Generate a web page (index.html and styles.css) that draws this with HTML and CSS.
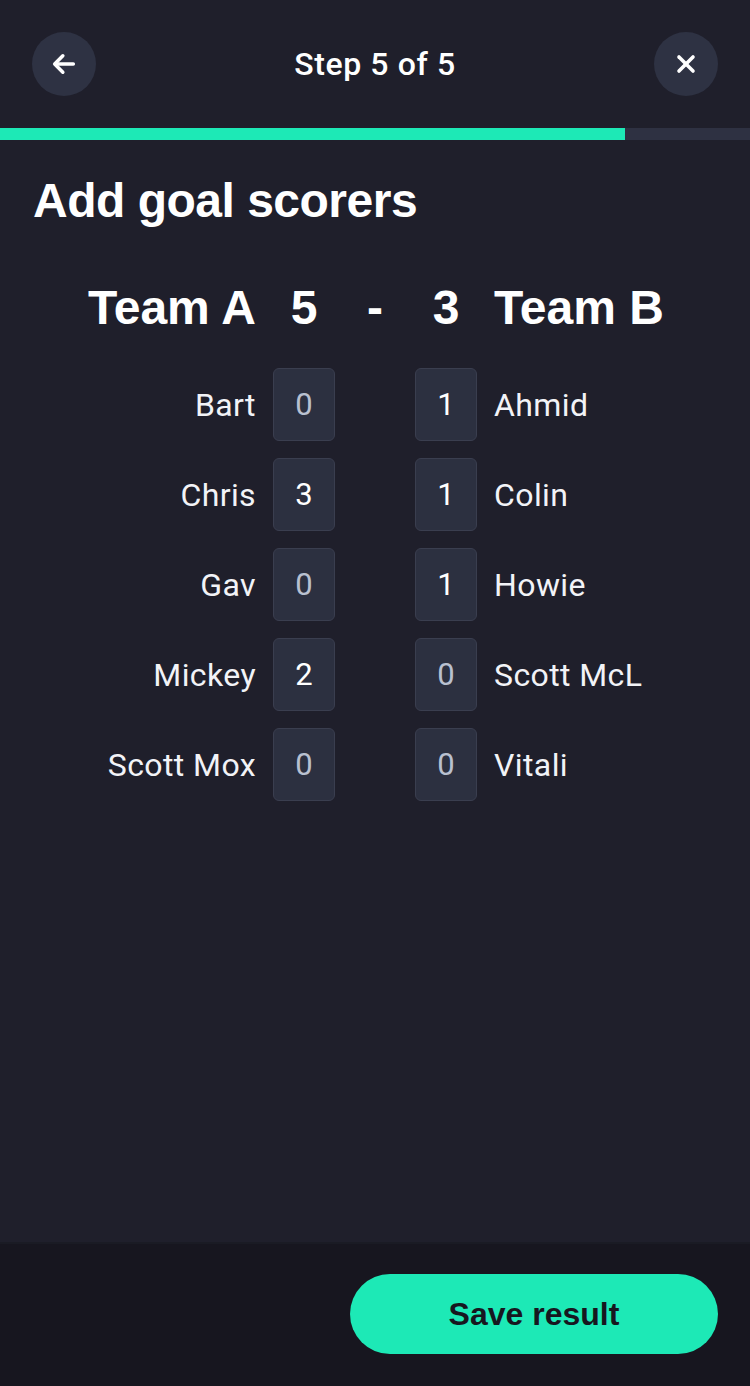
FILE: index.html
```html
<!DOCTYPE html>
<html lang="en">
<head>
    <meta charset="UTF-8">
    <meta name="viewport" content="width=device-width, initial-scale=1.0">
    <title>Add goal scorers</title>
    <link rel="stylesheet" href="styles.css">
</head>
<body>
    <div class="page">
        <header class="top-bar">
            <button class="round-btn" aria-label="Back">
                <svg width="28" height="28" viewBox="0 0 24 24" fill="none" stroke="#fff" stroke-width="3" stroke-linecap="round" stroke-linejoin="round">
                    <path d="M20 12H5"/>
                    <path d="M11 5l-7 7 7 7"/>
                </svg>
            </button>
            <div class="step-title">Step 5 of 5</div>
            <button class="round-btn" aria-label="Close">
                <svg width="24" height="24" viewBox="0 0 24 24" fill="none" stroke="#fff" stroke-width="3.6" stroke-linecap="round">
                    <path d="M5 5l14 14"/>
                    <path d="M19 5L5 19"/>
                </svg>
            </button>
        </header>

        <div class="progress">
            <div class="progress-fill"></div>
        </div>

        <main class="content">
            <h1>Add goal scorers</h1>

            <div class="scorers">
                <div class="team-name left">Team A</div>
                <div class="score">5</div>
                <div class="score">-</div>
                <div class="score">3</div>
                <div class="team-name right">Team B</div>
            </div>

            <div id="playerRows" class="scorers players"></div>
        </main>

        <footer class="footer">
            <button class="save-btn">Save result</button>
        </footer>
    </div>

    <script>
        const teamA = [['Bart', 0], ['Chris', 3], ['Gav', 0], ['Mickey', 2], ['Scott Mox', 0]];
        const teamB = [['Ahmid', 1], ['Colin', 1], ['Howie', 1], ['Scott McL', 0], ['Vitali', 0]];

        function goalBox(goals) {
            return `<div class="goal-box${goals === 0 ? ' empty' : ''}">${goals}</div>`;
        }

        const rows = document.getElementById('playerRows');
        teamA.forEach((player, i) => {
            const other = teamB[i];
            rows.innerHTML += `
                <div class="player left">${player[0]}</div>
                ${goalBox(player[1])}
                <div></div>
                ${goalBox(other[1])}
                <div class="player right">${other[0]}</div>
            `;
        });
    </script>
</body>
</html>
```

FILE: styles.css
```css
body {
    margin: 0;
    padding: 0;
    background-color: #1f1f2b;
    color: #fff;
    font-family: 'Roboto', 'Liberation Sans', sans-serif;
}

.page {
    display: flex;
    flex-direction: column;
    height: 100vh;
}

.top-bar {
    display: flex;
    align-items: center;
    justify-content: space-between;
    height: 128px;
    padding: 0 32px;
    box-sizing: border-box;
}

.round-btn {
    width: 64px;
    height: 64px;
    border-radius: 50%;
    border: none;
    background-color: #2e3243;
    display: flex;
    align-items: center;
    justify-content: center;
    padding: 0;
    cursor: pointer;
}

.step-title {
    font-size: 32px;
    font-weight: 500;
    letter-spacing: 0.6px;
}

.progress {
    height: 12px;
    background-color: #2e3142;
}

.progress-fill {
    width: 625px;
    height: 100%;
    background-color: #1de9b6;
}

.content {
    flex: 1;
    padding: 0 33px;
}

h1 {
    font-family: 'Liberation Sans', Arial, sans-serif;
    font-size: 48px;
    font-weight: 700;
    margin: 34px 0 0;
    line-height: 54px;
    letter-spacing: -0.5px;
}

.scorers {
    display: grid;
    grid-template-columns: 1fr 62px 80px 62px 1fr;
    align-items: center;
    margin: 0 -33px;
    margin-top: 52px;
}

.team-name,
.score {
    font-family: 'Liberation Sans', Arial, sans-serif;
    font-size: 48px;
    font-weight: 700;
    line-height: 56px;
    text-align: center;
}

.left {
    text-align: right;
    padding-right: 17px;
}

.right {
    text-align: left;
    padding-left: 17px;
}

.players {
    margin-top: 32px;
    row-gap: 17px;
}

.player {
    font-size: 32px;
    color: #f2f3f7;
    letter-spacing: 0.4px;
}

.goal-box {
    height: 73px;
    box-sizing: border-box;
    background-color: #2c3040;
    border: 1px solid #3a3e4f;
    border-radius: 6px;
    display: flex;
    align-items: center;
    justify-content: center;
    font-size: 31px;
    color: #fff;
}

.goal-box.empty {
    color: #b9c0d0;
}

.footer {
    height: 144px;
    background-color: #17161f;
    border-top: 2px solid #1a1b24;
    box-sizing: border-box;
    display: flex;
    justify-content: flex-end;
    padding: 30px 32px 0;
}

.save-btn {
    width: 368px;
    height: 80px;
    border-radius: 40px;
    border: none;
    background-color: #1de9b6;
    color: #17171f;
    font-family: 'Liberation Sans', Arial, sans-serif;
    font-size: 32px;
    font-weight: 700;
    cursor: pointer;
}
```
